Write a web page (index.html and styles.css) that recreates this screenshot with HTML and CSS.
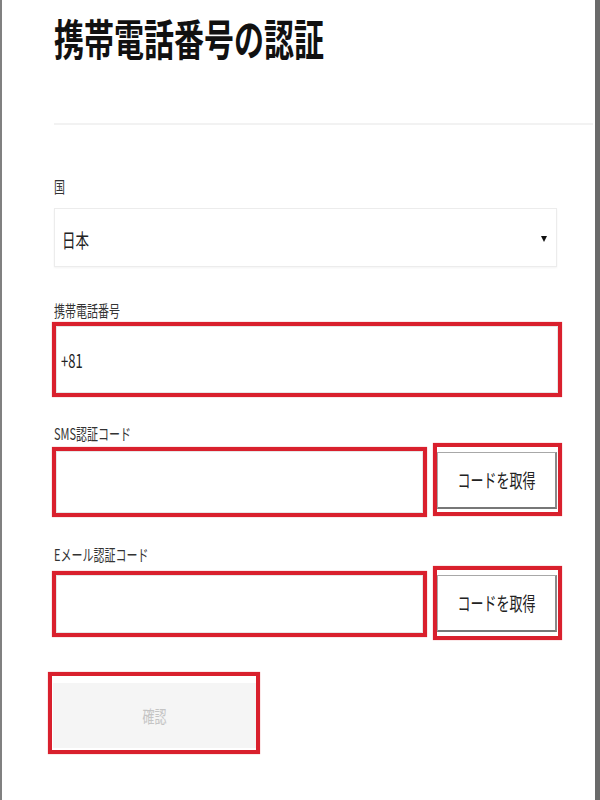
FILE: index.html
```html
<!DOCTYPE html>
<html lang="ja">
<head>
  <meta charset="UTF-8" />
  <meta name="viewport" content="width=device-width, initial-scale=1.0" />
  <title>携帯電話番号の認証</title>
  <link rel="stylesheet" href="styles.css">
</head>
<body>
  <div class="page">
    <header class="head">
      <h1><span class="tall">携帯電話番号の認証</span></h1>
    </header>

    <form class="form" id="verify-form">
      <div class="label"><span class="tall">国</span></div>
      <div class="select">
        <span class="tall">日本</span>
        <span class="arrow"></span>
      </div>

      <div class="label label-phone"><span class="tall">携帯電話番号</span></div>
      <div class="mark mark-phone">
        <div class="field"><span class="tall">+81</span></div>
      </div>

      <div class="label label-sms"><span class="tall">SMS認証コード</span></div>
      <div class="row">
        <div class="mark mark-input sms-input">
          <div class="field"></div>
        </div>
        <div class="mark mark-btn sms-btn">
          <button type="button" class="code-btn"><span class="tall">コードを取得</span></button>
        </div>
      </div>

      <div class="label label-mail"><span class="tall">Eメール認証コード</span></div>
      <div class="row row-mail">
        <div class="mark mark-input mail-input">
          <div class="field"></div>
        </div>
        <div class="mark mark-btn mail-btn">
          <button type="button" class="code-btn"><span class="tall">コードを取得</span></button>
        </div>
      </div>

      <div class="mark mark-submit">
        <button type="submit" class="submit-btn" disabled><span class="tall">確認</span></button>
      </div>
    </form>
  </div>
</body>
</html>
```

FILE: styles.css
```css
* {
  box-sizing: border-box;
}
body {
  margin: 0;
  font-family: "Noto Sans CJK JP", "Noto Sans", sans-serif;
  color: #222;
  background: #fff;
}
.page {
  width: 600px;
  height: 800px;
  border-left: 2px solid #808080;
  border-right: 5px solid #6a6a6a;
  padding-left: 50px;
  overflow: hidden;
}
.tall {
  display: inline-block;
  transform: scaleY(1.45);
  transform-origin: center;
}
.head {
  height: 125px;
  margin: 0 2px 0 2px;
  border-bottom: 2px solid #f2f2f2;
}
.head h1 {
  margin: 0;
  padding-top: 22px;
  font-size: 30px;
  line-height: 30px;
  font-weight: 700;
  color: #111;
  letter-spacing: 0;
}
.form {
  display: flex;
  flex-direction: column;
  align-items: flex-start;
}
.label {
  margin: 53px 0 0 2px;
  height: 16px;
  font-size: 11px;
  line-height: 16px;
  color: #333;
}
.label-phone { margin-top: 35px; }
.label-sms { margin-top: 28px; }
.label-mail { margin-top: 29px; }
.select {
  margin: 14px 0 0 2px;
  width: 503px;
  height: 59px;
  border: 1px solid #ececec;
  box-shadow: 0 1px 2px rgba(0, 0, 0, 0.05);
  display: flex;
  align-items: center;
  justify-content: space-between;
  padding: 2px 9px 0 7px;
  font-size: 13.5px;
  color: #222;
}
.arrow {
  width: 0;
  height: 0;
  border-left: 3px solid transparent;
  border-right: 3px solid transparent;
  border-top: 6px solid #111;
}
.mark {
  border: 4px solid #d9202d;
  box-shadow: 0 0 1px rgba(217, 32, 45, 0.6);
}
.mark-phone {
  margin-top: 4px;
  width: 510px;
  height: 75px;
}
.field {
  height: 100%;
  border: 1px solid #e6e6e6;
  display: flex;
  align-items: center;
  padding: 1px 0 0 4px;
  font-size: 13px;
  color: #222;
  background: #fff;
}
.row {
  display: flex;
  align-items: flex-start;
  gap: 6px;
  margin-top: 2px;
  width: 510px;
  height: 74px;
}
.row-mail { margin-top: 4px; }
.mark-input {
  width: 375px;
}
.sms-input {
  margin-top: 4px;
  height: 70px;
}
.mail-input {
  margin-top: 5px;
  height: 66px;
}
.mark-btn {
  width: 129px;
  padding: 5px 1px 3px 0;
}
.sms-btn { height: 73px; }
.mail-btn { height: 74px; padding-bottom: 4px; }
.code-btn {
  width: 100%;
  height: 100%;
  background: #fff;
  border: 1px solid #a8a8a8;
  border-right: 2px solid #8a8a8a;
  border-bottom: 2px solid #777;
  font-family: inherit;
  font-size: 13px;
  color: #222;
  padding: 0;
  cursor: pointer;
}
.mark-submit {
  margin: 32px 0 0 -4px;
  width: 212px;
  height: 82px;
  padding: 7px 0 2px 1px;
}
.submit-btn {
  width: 100%;
  height: 100%;
  border: none;
  background: #f5f5f5;
  font-family: inherit;
  font-size: 12px;
  color: #c4c4c4;
  padding: 0;
}
```
